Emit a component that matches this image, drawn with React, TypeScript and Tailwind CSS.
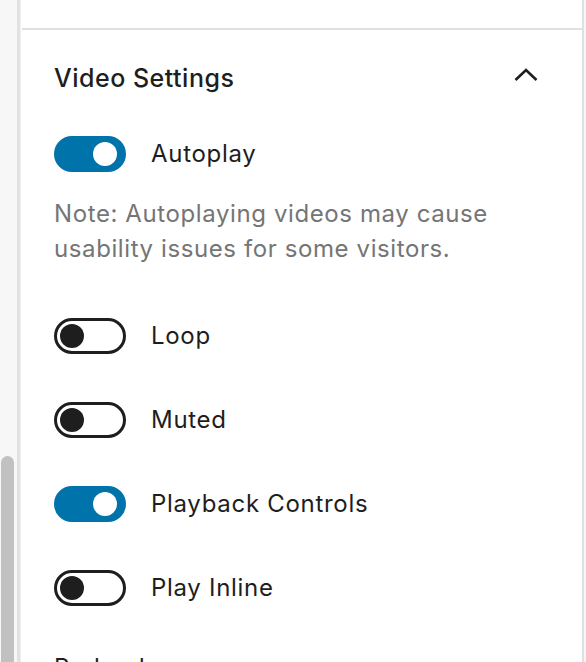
import React, { useState } from 'react';

type ToggleProps = { checked: boolean; onChange: () => void };

function Toggle({ checked, onChange }: ToggleProps) {
  return (
    <button
      type="button"
      onClick={onChange}
      className={`relative w-[72px] h-[36px] rounded-full shrink-0 flex items-center transition-colors ${
        checked ? 'bg-[#0073aa] border-[3px] border-[#0073aa]' : 'bg-white border-[3px] border-[#1e1e1e]'
      }`}
    >
      <span
        className={`w-[24px] h-[24px] rounded-full ${
          checked ? 'bg-white ml-[36px]' : 'bg-[#1e1e1e] ml-[3px]'
        }`}
      />
    </button>
  );
}

const rows = [
  { key: 'autoplay', label: 'Autoplay' },
  { key: 'loop', label: 'Loop' },
  { key: 'muted', label: 'Muted' },
  { key: 'controls', label: 'Playback Controls' },
  { key: 'inline', label: 'Play Inline' },
];

export default function App() {
  const [values, setValues] = useState<Record<string, boolean>>({
    autoplay: true,
    loop: false,
    muted: false,
    controls: true,
    inline: false,
  });
  const [open, setOpen] = useState(true);

  const flip = (k: string) => setValues(v => ({ ...v, [k]: !v[k] }));

  return (
    <div
      className="w-[586px] h-[662px] flex overflow-hidden bg-white text-[#1e1e1e]"
      style={{ fontFamily: 'Inter, "Noto Sans", Roboto, sans-serif' }}
    >
      {/* scrollbar gutter */}
      <div className="w-[17px] h-full bg-[#f7f7f7] flex flex-col pt-[456px] px-[1px]">
        <div className="flex-1 w-[13px] bg-[#c1c1c1] rounded-t-full" />
      </div>
      <div className="w-[3px] h-full bg-[#e2e2e2]" />
      <div className="w-[1px] h-full bg-[#f0f0f0]" />

      <div className="flex-1 flex flex-col border-r-2 border-[#e0e0e0]">
        <div className="h-[30px] shrink-0 border-b-2 border-[#e0e0e0] ml-[1px]" />

        <div className="flex flex-col pl-[33px] pr-[44px]">
          <button
            type="button"
            onClick={() => setOpen(o => !o)}
            className="flex items-center justify-between h-[98px]"
          >
            <span className="text-[25px] font-medium tracking-[0.5px]">Video Settings</span>
            <svg width="24" height="24" viewBox="0 0 24 24">
              <path
                d={open ? 'M1.5 13 12 3l10.5 10' : 'M1.5 6 12 16 22.5 6'}
                fill="none"
                stroke="#1e1e1e"
                strokeWidth="2.6"
              />
            </svg>
          </button>

          {open && (
            <div className="flex flex-col">
              {rows.map((r, i) => (
                <div key={r.key} className="flex flex-col">
                  <div
                    className={`flex items-center gap-[25px] h-[36px] ${
                      i === 0 ? 'mt-[8px]' : i === 1 ? 'mt-[52px]' : 'mt-[48px]'
                    }`}
                  >
                    <Toggle checked={values[r.key]} onChange={() => flip(r.key)} />
                    <span className="text-[24px] leading-none tracking-[0.7px]">{r.label}</span>
                  </div>
                  {i === 0 && (
                    <p className="text-[24px] leading-[35px] tracking-[0.6px] text-[#757575] mt-[24px]">
                      Note: Autoplaying videos may cause usability issues for some visitors.
                    </p>
                  )}
                </div>
              ))}
              <div className="mt-[50px] text-[24px] leading-none tracking-[0.7px]">Preload</div>
            </div>
          )}
        </div>
      </div>
      <div className="w-[2px] h-full bg-[#f7f7f7]" />
    </div>
  );
}
